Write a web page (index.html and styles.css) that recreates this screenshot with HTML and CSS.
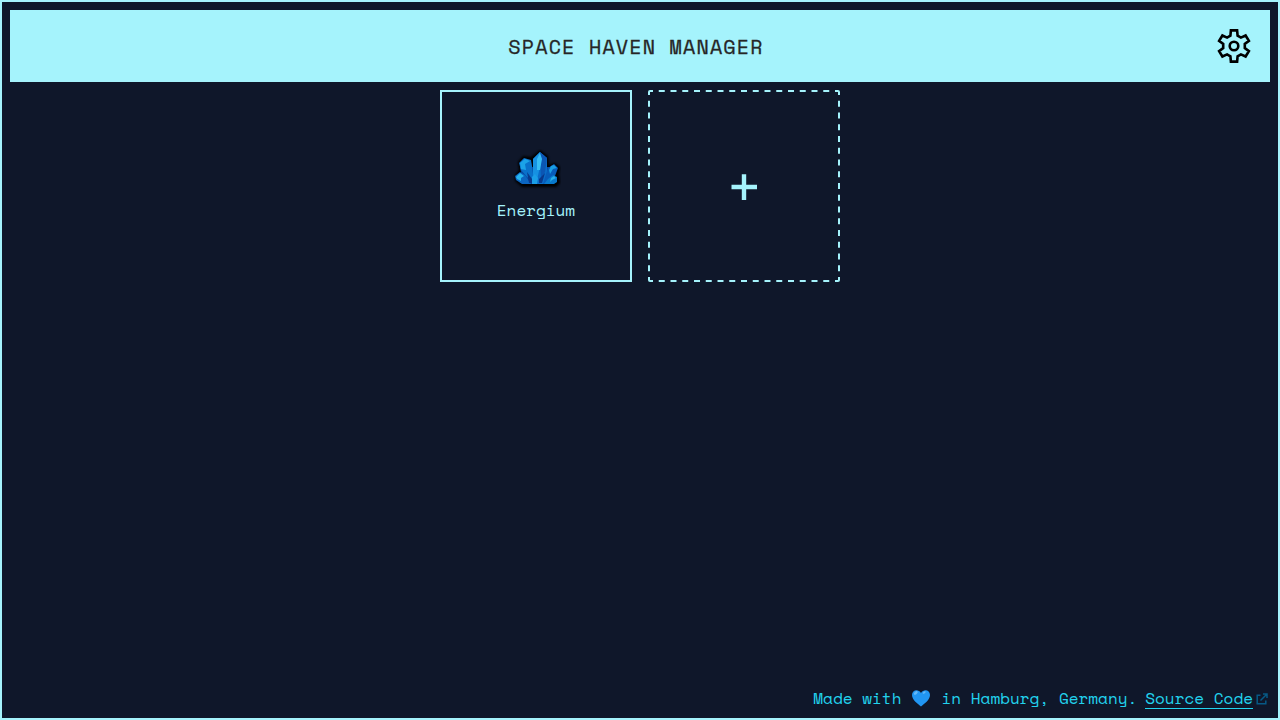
FILE: index.html
```html
<!DOCTYPE html>
<html lang="en">
<head>
<meta charset="utf-8">
<title>Space Haven Manager</title>
<link rel="stylesheet" href="styles.css">
</head>
<body>
<div class="app">
  <header class="header">
    <h1 class="title">SPACE HAVEN MANAGER</h1>
    <button class="settings" aria-label="Settings">
      <svg width="40" height="40" viewBox="0 0 40 40" fill="none" stroke="#000" stroke-width="2.600">
        <path d="M16.900 4.400H23.100L23.600 9.700 26.900 11.600 31.600 9.500 34.900 14.900 30.800 17.900V22.100L34.900 25.100 31.600 30.500 26.900 28.400 23.600 30.300 23.100 35.600H16.900L16.400 30.300 13.100 28.400 8.400 30.500 5.100 25.100 9.200 22.100V17.900L5.100 14.900 8.400 9.500 13.100 11.600 16.400 9.700z"/>
        <circle cx="20" cy="20" r="4.300"/>
      </svg>
    </button>
  </header>
  <main class="cards">
    <section class="card">
      <svg class="crystal" width="48" height="40" viewBox="0 0 48 40">
        <path class="shadow" d="M2 26l4-5-1-8 5-6 8 1 9-7 8 6 1 9 6-2 5 4-1 7 1 9-4 4H9l-7-6z" fill="#000"/>
        <g class="shards">
          <path d="M7 18h34l-2 17H10z" fill="#08469e"/>
          <path d="M20 10l7-7 7 6v26H20z" fill="#0a6cc8"/>
          <path d="M20 10l7-7 1 10-4 18-4-3z" fill="#1691e2"/>
          <path d="M27 3l7 6-2 14-4 7z" fill="#0b56b4"/>
          <path d="M24 10l3-6 2 6-2 11h-3z" fill="#35bdf5"/>
          <path d="M6 14l5-5 7 2 1 6 2 16-7-5-6-7z" fill="#0971ca"/>
          <path d="M7 14l5-4 5 2-5 3 1 6-5-1z" fill="#1ba3e8"/>
          <path d="M2 27l5-4 5 3 6 9H9l-6-4z" fill="#0b65c0"/>
          <path d="M3 28l4-4 4 3-3 2v3l-4-2z" fill="#27b5ef"/>
          <path d="M33 25l2-6 6-4 4 4-3 8-6 8h-6z" fill="#075bb9"/>
          <path d="M36 21l2-4 3-1 3 3-4 1-3 5z" fill="#1a9ee3"/>
          <path d="M35 30l5-4 4 2v5l-3 2H31z" fill="#0878cc"/>
          <path d="M38 29l3-2 2 2-4 2-2 2z" fill="#26afe8"/>
          <path d="M19 28l3-3 3 4-1 6h-5z" fill="#1a9ee7"/>
          <path d="M14 23l5 7v4h-3zM26 30l6-6-3 10h-3z" fill="#08388a"/>
        </g>
      </svg>
      <span class="name">Energium</span>
    </section>
    <button class="add" aria-label="Add">
      <svg class="frame" width="192" height="192" viewBox="0 0 192 192" fill="none" stroke="#a5f3fc">
        <path d="M0 1H192M0 191H192M1 0V192M191 0V192" stroke-width="2" stroke-dasharray="6 5.750" stroke-dashoffset="1"/>
        <path d="M83.500 97H109M96 84.300V110" stroke-width="4.400"/>
      </svg>
    </button>
  </main>
  <footer class="footer">
    <span>Made with</span>
    <svg class="heart" width="20" height="20" viewBox="0 0 20 20">
      <path d="M10 18.500C7 16 1 12 1 7 1 1.700 7.500.7 10 5 12.500.7 19 1.700 19 7 19 12 13 16 10 18.500z" fill="#2196f3"/>
      <ellipse cx="4.800" cy="4.900" rx="2.300" ry="1.300" transform="rotate(-40 4.800 4.900)" fill="#64b9fa"/>
      <ellipse cx="13.200" cy="4.500" rx="1.700" ry=".9" transform="rotate(-35 13.200 4.500)" fill="#64b9fa"/>
    </svg>
    <span>in Hamburg, Germany.</span>
    <a class="source" href="#">Source Code</a>
    <svg class="external" width="12" height="12" viewBox="0 0 12 12" fill="none" stroke="#075985" stroke-width="1.500">
      <path d="M4.500 2.200H1.200v8.600h8.600V7.500M7 1h4v4M11 1L4.500 7.500"/>
    </svg>
  </footer>
</div>
</body>
</html>
```
FILE: styles.css
```css
* {
  box-sizing: border-box;
}

body {
  margin: 0;
  background: #0f172a;
  color: #a5f3fc;
  font: 16px/24px "Space Mono", "Liberation Mono", monospace;
  -webkit-font-smoothing: antialiased;
}

.app {
  display: flex;
  flex-direction: column;
  height: 100vh;
  padding: 8px;
  border: 2px solid #a5f3fc;
}

.header {
  display: flex;
  align-items: center;
  height: 72px;
  padding: 0 16px;
  background: #a5f3fc;
}

.title {
  flex: 1;
  margin: 0;
  padding: 2px 0 0 32px;
  color: #262626;
  font-size: 20px;
  font-weight: 400;
  line-height: 28px;
  letter-spacing: 1.2px;
  text-align: center;
  -webkit-text-stroke: 0.3px #262626;
}

.settings {
  width: 40px;
  height: 40px;
  padding: 0;
  border: 0;
  background: none;
}

.settings svg,
.frame {
  display: block;
}

.cards {
  display: flex;
  flex: 1;
  align-items: flex-start;
  justify-content: center;
  gap: 16px;
  padding-top: 8px;
}

.card {
  display: flex;
  flex-direction: column;
  align-items: center;
  width: 192px;
  height: 192px;
  padding-top: 57px;
  border: 2px solid #a5f3fc;
}

.add {
  width: 192px;
  height: 192px;
  padding: 0;
  border: 0;
  background: none;
}

.frame {
  border-radius: 2px;
}

.crystal {
  margin-left: 2px;
}

.shadow {
  filter: blur(0.8px);
}

.shards {
  filter: blur(0.4px);
}

.name {
  margin-top: 9px;
}

.footer {
  display: flex;
  align-items: center;
  justify-content: flex-end;
  height: 24px;
  padding-right: 2px;
  color: #22d3ee;
}

.heart {
  margin: 0 10px;
}

.source {
  margin-left: 8px;
  border-bottom: 1px solid #22d3ee;
  color: inherit;
  line-height: 20px;
  text-decoration: none;
}

.external {
  position: relative;
  top: 1px;
  margin-left: 3px;
}
```
